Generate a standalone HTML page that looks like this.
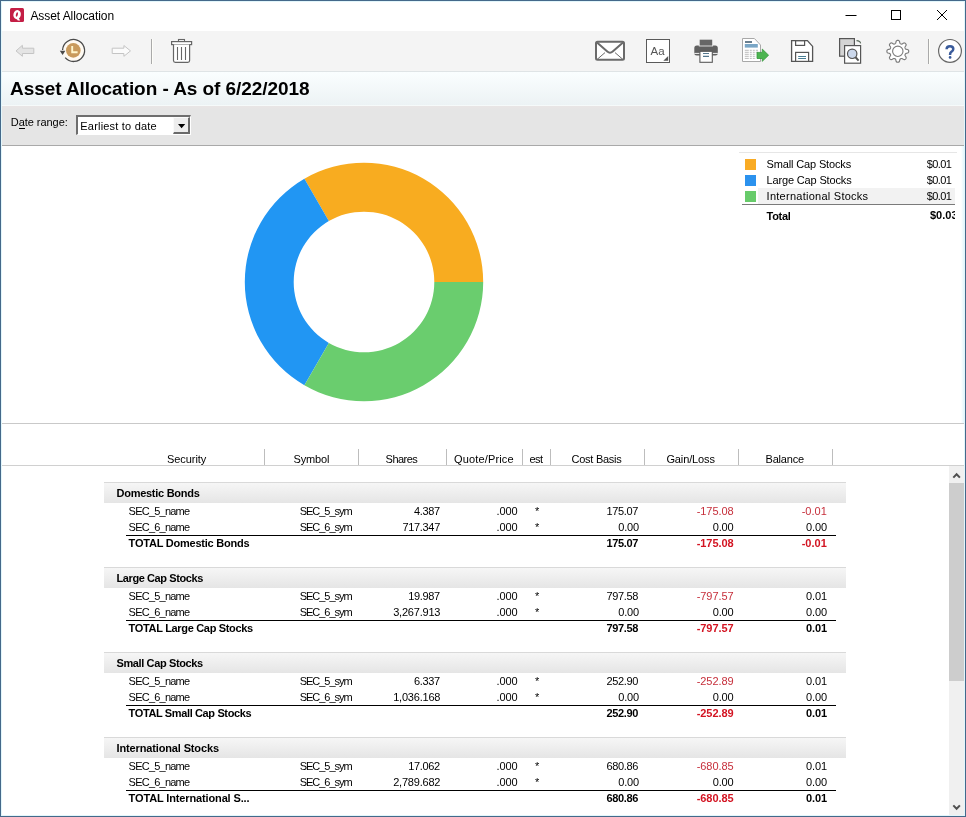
<!DOCTYPE html>
<html><head><meta charset="utf-8"><style>
html,body{margin:0;padding:0;width:966px;height:817px;overflow:hidden;background:#fff;}
body{position:relative;font-family:"Liberation Sans",sans-serif;color:#000;}
.t{position:absolute;white-space:nowrap;}
#w{position:absolute;left:0;top:0;width:966px;height:817px;will-change:transform;}
.b{position:absolute;}
</style></head><body><div id="w">
<div class="b" style="left:0px;top:0px;width:966px;height:31px;background:#fff"></div>
<div class="b" style="left:0px;top:31px;width:966px;height:40px;background:#f4f4f4"></div>
<div class="b" style="left:0px;top:71px;width:966px;height:1px;background:#dfe4e6"></div>
<div class="b" style="left:0px;top:72px;width:966px;height:34px;background:linear-gradient(#fafeff,#ecf2f4)"></div>
<div class="b" style="left:0px;top:105px;width:966px;height:1px;background:#f6fafa"></div>
<div class="b" style="left:0px;top:106px;width:966px;height:39px;background:linear-gradient(#e9e5e5,#e5e5e5 4px,#e5e5e5)"></div>
<div class="b" style="left:0px;top:145px;width:966px;height:1px;background:#a9a9a9"></div>
<div class="b" style="left:0px;top:146px;width:966px;height:277px;background:#fff"></div>
<div class="b" style="left:0px;top:423px;width:966px;height:1px;background:#c9c9c9"></div>
<div class="b" style="left:0px;top:424px;width:966px;height:41px;background:#fff"></div>
<div class="b" style="left:0px;top:465px;width:964px;height:1px;background:#d0d0d0"></div>
<div class="t" style="left:30.40px;top:9.84px;font-size:12px;line-height:12px;letter-spacing:-0.067px;">Asset Allocation</div>
<div class="t" style="left:10.00px;top:78.92px;font-size:19px;line-height:19px;font-weight:bold;letter-spacing:-0.061px;">Asset Allocation - As of 6/22/2018</div>
<div class="t" style="left:10.80px;top:116.99px;font-size:11px;line-height:11px;letter-spacing:-0.050px;">Date range:</div>
<div class="b" style="left:18.9375px;top:128px;width:6px;height:1px;background:#000"></div>
<div class="b" style="left:76px;top:115px;width:115px;height:20px;background:#fff;border-top:2px solid #6e6e6e;border-left:2px solid #6e6e6e;border-bottom:1px solid #fff;border-right:1px solid #fff;box-sizing:border-box;"></div>
<div class="t" style="left:80.30px;top:120.99px;font-size:11px;line-height:11px;letter-spacing:0.200px;">Earliest to date</div>
<div class="b" style="left:173px;top:117px;width:17px;height:17px;background:#ededed;border-top:1px solid #fafafa;border-left:1px solid #fafafa;border-bottom:2px solid #6a6a6a;border-right:2px solid #6a6a6a;box-sizing:border-box;"></div>
<div class="b" style="left:739px;top:152px;width:218px;height:1px;background:#e6e6e6"></div>
<div class="b" style="left:758px;top:188px;width:197px;height:16px;background:#f2f2f2"></div>
<div class="b" style="left:742px;top:204px;width:213px;height:1px;background:#7a7a7a"></div>
<div class="b" style="left:745px;top:159px;width:11px;height:11px;background:#f9ab24"></div>
<div class="t" style="left:766.60px;top:158.69px;font-size:11px;line-height:11px;letter-spacing:-0.147px;">Small Cap Stocks</div>
<div class="t" style="left:926.70px;top:158.69px;font-size:11px;line-height:11px;letter-spacing:-0.600px;">$0.01</div>
<div class="b" style="left:745px;top:175px;width:11px;height:11px;background:#2b92ee"></div>
<div class="t" style="left:766.60px;top:174.69px;font-size:11px;line-height:11px;letter-spacing:-0.160px;">Large Cap Stocks</div>
<div class="t" style="left:926.70px;top:174.69px;font-size:11px;line-height:11px;letter-spacing:-0.600px;">$0.01</div>
<div class="b" style="left:745px;top:191px;width:11px;height:11px;background:#67cb6a"></div>
<div class="t" style="left:766.60px;top:190.69px;font-size:11px;line-height:11px;letter-spacing:0.258px;">International Stocks</div>
<div class="t" style="left:926.70px;top:190.69px;font-size:11px;line-height:11px;letter-spacing:-0.600px;">$0.01</div>
<div class="t" style="left:766.60px;top:210.89px;font-size:11px;line-height:11px;font-weight:bold;letter-spacing:-0.325px;">Total</div>
<div style="position:absolute;left:900px;top:205px;width:55px;height:20px;overflow:hidden"><div class="t" style="left:30px;top:5.4px;font-size:11px;line-height:11px;font-weight:bold">$0.03</div></div>
<div class="b" style="left:264px;top:449px;width:1px;height:16px;background:#bdbdbd"></div>
<div class="b" style="left:358px;top:449px;width:1px;height:16px;background:#bdbdbd"></div>
<div class="b" style="left:446px;top:449px;width:1px;height:16px;background:#bdbdbd"></div>
<div class="b" style="left:522px;top:449px;width:1px;height:16px;background:#bdbdbd"></div>
<div class="b" style="left:550px;top:449px;width:1px;height:16px;background:#bdbdbd"></div>
<div class="b" style="left:644px;top:449px;width:1px;height:16px;background:#bdbdbd"></div>
<div class="b" style="left:738px;top:449px;width:1px;height:16px;background:#bdbdbd"></div>
<div class="b" style="left:832px;top:449px;width:1px;height:16px;background:#bdbdbd"></div>
<div class="t" style="left:167.00px;top:454.09px;font-size:11px;line-height:11px;letter-spacing:-0.071px;">Security</div>
<div class="t" style="left:293.50px;top:454.09px;font-size:11px;line-height:11px;letter-spacing:-0.160px;">Symbol</div>
<div class="t" style="left:385.60px;top:454.09px;font-size:11px;line-height:11px;letter-spacing:-0.520px;">Shares</div>
<div class="t" style="left:454.00px;top:454.09px;font-size:11px;line-height:11px;letter-spacing:0.150px;">Quote/Price</div>
<div class="t" style="left:529.40px;top:454.09px;font-size:11px;line-height:11px;letter-spacing:-0.450px;">est</div>
<div class="t" style="left:571.50px;top:454.09px;font-size:11px;line-height:11px;letter-spacing:-0.256px;">Cost Basis</div>
<div class="t" style="left:666.40px;top:454.09px;font-size:11px;line-height:11px;letter-spacing:-0.125px;">Gain/Loss</div>
<div class="t" style="left:765.50px;top:454.09px;font-size:11px;line-height:11px;letter-spacing:-0.200px;">Balance</div>
<div class="b" style="left:104px;top:482px;width:742px;height:1px;background:#d9d9d9"></div>
<div class="b" style="left:104px;top:483px;width:742px;height:20px;background:linear-gradient(#f6f6f6,#e5e5e5)"></div>
<div class="t" style="left:116.50px;top:487.89px;font-size:11px;line-height:11px;font-weight:bold;letter-spacing:-0.269px;">Domestic Bonds</div>
<div class="t" style="left:128.60px;top:505.69px;font-size:11px;line-height:11px;letter-spacing:-0.778px;">SEC_5_name</div>
<div class="t" style="left:299.70px;top:505.69px;font-size:11px;line-height:11px;letter-spacing:-1.025px;">SEC_5_sym</div>
<div class="t" style="left:414.10px;top:505.69px;font-size:11px;line-height:11px;letter-spacing:-0.400px;">4.387</div>
<div class="t" style="left:496.60px;top:505.69px;font-size:11px;line-height:11px;letter-spacing:-0.133px;">.000</div>
<div class="t" style="left:535.00px;top:505.69px;font-size:11px;line-height:11px;">*</div>
<div class="t" style="left:606.60px;top:505.69px;font-size:11px;line-height:11px;letter-spacing:-0.360px;">175.07</div>
<div class="t" style="left:696.70px;top:505.69px;font-size:11px;line-height:11px;color:#c62f3b;letter-spacing:-0.067px;">-175.08</div>
<div class="t" style="left:801.70px;top:505.69px;font-size:11px;line-height:11px;color:#c62f3b;">-0.01</div>
<div class="t" style="left:128.60px;top:521.69px;font-size:11px;line-height:11px;letter-spacing:-0.778px;">SEC_6_name</div>
<div class="t" style="left:299.70px;top:521.69px;font-size:11px;line-height:11px;letter-spacing:-1.025px;">SEC_6_sym</div>
<div class="t" style="left:402.50px;top:521.69px;font-size:11px;line-height:11px;letter-spacing:-0.333px;">717.347</div>
<div class="t" style="left:496.60px;top:521.69px;font-size:11px;line-height:11px;letter-spacing:-0.133px;">.000</div>
<div class="t" style="left:535.00px;top:521.69px;font-size:11px;line-height:11px;">*</div>
<div class="t" style="left:618.20px;top:521.69px;font-size:11px;line-height:11px;letter-spacing:-0.133px;">0.00</div>
<div class="t" style="left:712.70px;top:521.69px;font-size:11px;line-height:11px;letter-spacing:-0.133px;">0.00</div>
<div class="t" style="left:806.10px;top:521.69px;font-size:11px;line-height:11px;letter-spacing:-0.133px;">0.00</div>
<div class="b" style="left:126px;top:535px;width:710px;height:1px;background:#000"></div>
<div class="t" style="left:128.60px;top:537.99px;font-size:11px;line-height:11px;font-weight:bold;letter-spacing:-0.221px;">TOTAL Domestic Bonds</div>
<div class="t" style="left:606.60px;top:537.99px;font-size:11px;line-height:11px;font-weight:bold;letter-spacing:-0.360px;">175.07</div>
<div class="t" style="left:696.70px;top:537.99px;font-size:11px;line-height:11px;font-weight:bold;color:#d31422;letter-spacing:-0.067px;">-175.08</div>
<div class="t" style="left:801.70px;top:537.99px;font-size:11px;line-height:11px;font-weight:bold;color:#d31422;">-0.01</div>
<div class="b" style="left:104px;top:567px;width:742px;height:1px;background:#d9d9d9"></div>
<div class="b" style="left:104px;top:568px;width:742px;height:20px;background:linear-gradient(#f6f6f6,#e5e5e5)"></div>
<div class="t" style="left:116.50px;top:572.89px;font-size:11px;line-height:11px;font-weight:bold;letter-spacing:-0.407px;">Large Cap Stocks</div>
<div class="t" style="left:128.60px;top:590.69px;font-size:11px;line-height:11px;letter-spacing:-0.778px;">SEC_5_name</div>
<div class="t" style="left:299.70px;top:590.69px;font-size:11px;line-height:11px;letter-spacing:-1.025px;">SEC_5_sym</div>
<div class="t" style="left:408.30px;top:590.69px;font-size:11px;line-height:11px;letter-spacing:-0.360px;">19.987</div>
<div class="t" style="left:496.60px;top:590.69px;font-size:11px;line-height:11px;letter-spacing:-0.133px;">.000</div>
<div class="t" style="left:535.00px;top:590.69px;font-size:11px;line-height:11px;">*</div>
<div class="t" style="left:606.60px;top:590.69px;font-size:11px;line-height:11px;letter-spacing:-0.360px;">797.58</div>
<div class="t" style="left:696.70px;top:590.69px;font-size:11px;line-height:11px;color:#c62f3b;letter-spacing:-0.067px;">-797.57</div>
<div class="t" style="left:806.10px;top:590.69px;font-size:11px;line-height:11px;letter-spacing:-0.133px;">0.01</div>
<div class="t" style="left:128.60px;top:606.69px;font-size:11px;line-height:11px;letter-spacing:-0.778px;">SEC_6_name</div>
<div class="t" style="left:299.70px;top:606.69px;font-size:11px;line-height:11px;letter-spacing:-1.025px;">SEC_6_sym</div>
<div class="t" style="left:393.20px;top:606.69px;font-size:11px;line-height:11px;letter-spacing:-0.213px;">3,267.913</div>
<div class="t" style="left:496.60px;top:606.69px;font-size:11px;line-height:11px;letter-spacing:-0.133px;">.000</div>
<div class="t" style="left:535.00px;top:606.69px;font-size:11px;line-height:11px;">*</div>
<div class="t" style="left:618.20px;top:606.69px;font-size:11px;line-height:11px;letter-spacing:-0.133px;">0.00</div>
<div class="t" style="left:712.70px;top:606.69px;font-size:11px;line-height:11px;letter-spacing:-0.133px;">0.00</div>
<div class="t" style="left:806.10px;top:606.69px;font-size:11px;line-height:11px;letter-spacing:-0.133px;">0.00</div>
<div class="b" style="left:126px;top:620px;width:710px;height:1px;background:#000"></div>
<div class="t" style="left:128.60px;top:622.99px;font-size:11px;line-height:11px;font-weight:bold;letter-spacing:-0.324px;">TOTAL Large Cap Stocks</div>
<div class="t" style="left:606.60px;top:622.99px;font-size:11px;line-height:11px;font-weight:bold;letter-spacing:-0.360px;">797.58</div>
<div class="t" style="left:696.70px;top:622.99px;font-size:11px;line-height:11px;font-weight:bold;color:#d31422;letter-spacing:-0.067px;">-797.57</div>
<div class="t" style="left:806.10px;top:622.99px;font-size:11px;line-height:11px;font-weight:bold;letter-spacing:-0.133px;">0.01</div>
<div class="b" style="left:104px;top:652px;width:742px;height:1px;background:#d9d9d9"></div>
<div class="b" style="left:104px;top:653px;width:742px;height:20px;background:linear-gradient(#f6f6f6,#e5e5e5)"></div>
<div class="t" style="left:116.50px;top:657.89px;font-size:11px;line-height:11px;font-weight:bold;letter-spacing:-0.380px;">Small Cap Stocks</div>
<div class="t" style="left:128.60px;top:675.69px;font-size:11px;line-height:11px;letter-spacing:-0.778px;">SEC_5_name</div>
<div class="t" style="left:299.70px;top:675.69px;font-size:11px;line-height:11px;letter-spacing:-1.025px;">SEC_5_sym</div>
<div class="t" style="left:414.10px;top:675.69px;font-size:11px;line-height:11px;letter-spacing:-0.400px;">6.337</div>
<div class="t" style="left:496.60px;top:675.69px;font-size:11px;line-height:11px;letter-spacing:-0.133px;">.000</div>
<div class="t" style="left:535.00px;top:675.69px;font-size:11px;line-height:11px;">*</div>
<div class="t" style="left:606.60px;top:675.69px;font-size:11px;line-height:11px;letter-spacing:-0.360px;">252.90</div>
<div class="t" style="left:696.70px;top:675.69px;font-size:11px;line-height:11px;color:#c62f3b;letter-spacing:-0.067px;">-252.89</div>
<div class="t" style="left:806.10px;top:675.69px;font-size:11px;line-height:11px;letter-spacing:-0.133px;">0.01</div>
<div class="t" style="left:128.60px;top:691.69px;font-size:11px;line-height:11px;letter-spacing:-0.778px;">SEC_6_name</div>
<div class="t" style="left:299.70px;top:691.69px;font-size:11px;line-height:11px;letter-spacing:-1.025px;">SEC_6_sym</div>
<div class="t" style="left:393.20px;top:691.69px;font-size:11px;line-height:11px;letter-spacing:-0.213px;">1,036.168</div>
<div class="t" style="left:496.60px;top:691.69px;font-size:11px;line-height:11px;letter-spacing:-0.133px;">.000</div>
<div class="t" style="left:535.00px;top:691.69px;font-size:11px;line-height:11px;">*</div>
<div class="t" style="left:618.20px;top:691.69px;font-size:11px;line-height:11px;letter-spacing:-0.133px;">0.00</div>
<div class="t" style="left:712.70px;top:691.69px;font-size:11px;line-height:11px;letter-spacing:-0.133px;">0.00</div>
<div class="t" style="left:806.10px;top:691.69px;font-size:11px;line-height:11px;letter-spacing:-0.133px;">0.00</div>
<div class="b" style="left:126px;top:705px;width:710px;height:1px;background:#000"></div>
<div class="t" style="left:128.60px;top:707.99px;font-size:11px;line-height:11px;font-weight:bold;letter-spacing:-0.371px;">TOTAL Small Cap Stocks</div>
<div class="t" style="left:606.60px;top:707.99px;font-size:11px;line-height:11px;font-weight:bold;letter-spacing:-0.360px;">252.90</div>
<div class="t" style="left:696.70px;top:707.99px;font-size:11px;line-height:11px;font-weight:bold;color:#d31422;letter-spacing:-0.067px;">-252.89</div>
<div class="t" style="left:806.10px;top:707.99px;font-size:11px;line-height:11px;font-weight:bold;letter-spacing:-0.133px;">0.01</div>
<div class="b" style="left:104px;top:737px;width:742px;height:1px;background:#d9d9d9"></div>
<div class="b" style="left:104px;top:738px;width:742px;height:20px;background:linear-gradient(#f6f6f6,#e5e5e5)"></div>
<div class="t" style="left:116.50px;top:742.89px;font-size:11px;line-height:11px;font-weight:bold;letter-spacing:-0.137px;">International Stocks</div>
<div class="t" style="left:128.60px;top:760.69px;font-size:11px;line-height:11px;letter-spacing:-0.778px;">SEC_5_name</div>
<div class="t" style="left:299.70px;top:760.69px;font-size:11px;line-height:11px;letter-spacing:-1.025px;">SEC_5_sym</div>
<div class="t" style="left:408.30px;top:760.69px;font-size:11px;line-height:11px;letter-spacing:-0.360px;">17.062</div>
<div class="t" style="left:496.60px;top:760.69px;font-size:11px;line-height:11px;letter-spacing:-0.133px;">.000</div>
<div class="t" style="left:535.00px;top:760.69px;font-size:11px;line-height:11px;">*</div>
<div class="t" style="left:606.60px;top:760.69px;font-size:11px;line-height:11px;letter-spacing:-0.360px;">680.86</div>
<div class="t" style="left:696.70px;top:760.69px;font-size:11px;line-height:11px;color:#c62f3b;letter-spacing:-0.067px;">-680.85</div>
<div class="t" style="left:806.10px;top:760.69px;font-size:11px;line-height:11px;letter-spacing:-0.133px;">0.01</div>
<div class="t" style="left:128.60px;top:776.69px;font-size:11px;line-height:11px;letter-spacing:-0.778px;">SEC_6_name</div>
<div class="t" style="left:299.70px;top:776.69px;font-size:11px;line-height:11px;letter-spacing:-1.025px;">SEC_6_sym</div>
<div class="t" style="left:393.20px;top:776.69px;font-size:11px;line-height:11px;letter-spacing:-0.213px;">2,789.682</div>
<div class="t" style="left:496.60px;top:776.69px;font-size:11px;line-height:11px;letter-spacing:-0.133px;">.000</div>
<div class="t" style="left:535.00px;top:776.69px;font-size:11px;line-height:11px;">*</div>
<div class="t" style="left:618.20px;top:776.69px;font-size:11px;line-height:11px;letter-spacing:-0.133px;">0.00</div>
<div class="t" style="left:712.70px;top:776.69px;font-size:11px;line-height:11px;letter-spacing:-0.133px;">0.00</div>
<div class="t" style="left:806.10px;top:776.69px;font-size:11px;line-height:11px;letter-spacing:-0.133px;">0.00</div>
<div class="b" style="left:126px;top:790px;width:710px;height:1px;background:#000"></div>
<div class="t" style="left:128.60px;top:792.99px;font-size:11px;line-height:11px;font-weight:bold;letter-spacing:-0.135px;">TOTAL International S...</div>
<div class="t" style="left:606.60px;top:792.99px;font-size:11px;line-height:11px;font-weight:bold;letter-spacing:-0.360px;">680.86</div>
<div class="t" style="left:696.70px;top:792.99px;font-size:11px;line-height:11px;font-weight:bold;color:#d31422;letter-spacing:-0.067px;">-680.85</div>
<div class="t" style="left:806.10px;top:792.99px;font-size:11px;line-height:11px;font-weight:bold;letter-spacing:-0.133px;">0.01</div>
<div class="b" style="left:949px;top:466px;width:15px;height:350px;background:#f0f0f0"></div>
<div class="b" style="left:949px;top:483px;width:15px;height:198px;background:#cdcdcd"></div>
<div class="b" style="left:1px;top:1px;width:964px;height:1px;background:#e2f6fb"></div>
<div class="b" style="left:1px;top:1px;width:1px;height:815px;background:#e2f6fb"></div>
<div class="b" style="left:961px;top:146px;width:3px;height:277px;background:linear-gradient(90deg,rgba(235,250,255,0),#e4f7fd)"></div>
<div class="b" style="left:964px;top:1px;width:1px;height:815px;background:#e2f6fb"></div>
<div class="b" style="left:1px;top:815px;width:964px;height:1px;background:#e2f6fb"></div>
<div class="b" style="left:0px;top:0px;width:966px;height:1px;background:#44698a"></div>
<div class="b" style="left:0px;top:0px;width:1px;height:817px;background:#44698a"></div>
<div class="b" style="left:965px;top:0px;width:1px;height:817px;background:#44698a"></div>
<div class="b" style="left:0px;top:816px;width:966px;height:1px;background:#44698a"></div>
<svg class="b" style="left:0;top:0" width="966" height="817">
<path d="M483.20,282.00 A119.2,119.2 0 0 0 304.40,178.77 L328.85,221.12 A70.3,70.3 0 0 1 434.30,282.00 Z" fill="#f8ac20"/><path d="M304.40,178.77 A119.2,119.2 0 0 0 304.40,385.23 L328.85,342.88 A70.3,70.3 0 0 1 328.85,221.12 Z" fill="#2196f3"/><path d="M304.40,385.23 A119.2,119.2 0 0 0 483.20,282.00 L434.30,282.00 A70.3,70.3 0 0 1 328.85,342.88 Z" fill="#6acd6e"/>
<!-- title bar Q icon -->
<rect x="10" y="8" width="14" height="14" rx="1.5" fill="#c41e45"/>
<ellipse cx="17.1" cy="14.6" rx="3.7" ry="4.6" transform="rotate(14 17.1 14.6)" fill="#fff"/>
<ellipse cx="16.9" cy="14.5" rx="0.95" ry="2.4" transform="rotate(14 16.9 14.5)" fill="#c41e45"/>
<path d="M16.2,18.2 L18.6,18 L20.2,20.4 L17.8,20.6 Z" fill="#fff"/>
<!-- window controls -->
<rect x="845.5" y="15" width="11" height="1" fill="#000"/>
<rect x="891.5" y="10.5" width="9" height="9" fill="none" stroke="#000" stroke-width="1"/>
<path d="M937,10 L947,20 M947,10 L937,20" stroke="#000" stroke-width="1"/>
<!-- back arrow (disabled) -->
<path d="M16,50.9 L22.4,45.3 L22.4,48.2 L33.8,48.2 L33.8,53.5 L22.4,53.5 L22.4,56.3 Z" fill="#e4e4e4" stroke="#c4c4c4" stroke-width="1"/>
<!-- history clock -->
<circle cx="73.3" cy="50.4" r="10.6" fill="#fffaf2"/>
<path d="M62.6,50 A11,11 0 1 1 65.2,57.6" fill="none" stroke="#4a4a4a" stroke-width="1.3"/>
<path d="M59.8,50.8 L65.4,50.8 L62.6,55 Z" fill="#4a4a4a"/>
<circle cx="73.3" cy="50.4" r="7.3" fill="#c99a5c"/>
<path d="M72.2,46 L72.2,52.2 L77.6,52.2" fill="none" stroke="#fff6cc" stroke-width="1.9"/>
<!-- forward arrow (disabled) -->
<path d="M130.5,50.9 L123.9,45.5 L123.9,48.2 L112.2,48.2 L112.2,53.5 L123.9,53.5 L123.9,56.3 Z" fill="#fbfbfb" stroke="#c4c4c4" stroke-width="1"/>
<!-- separator -->
<rect x="151" y="39" width="1" height="25" fill="#aaaaaa"/><rect x="152" y="39" width="1" height="25" fill="#fdfdf8"/>
<!-- trash -->
<rect x="178.5" y="39.5" width="6" height="2.2" fill="none" stroke="#666" stroke-width="1.1"/>
<rect x="171.6" y="41.6" width="20" height="3" fill="#fff" stroke="#666" stroke-width="1.2"/>
<path d="M173.5,44.6 L173.5,60.5 Q173.5,62.3 175.3,62.3 L187.8,62.3 Q189.6,62.3 189.6,60.5 L189.6,44.6" fill="#fff" stroke="#666" stroke-width="1.2"/>
<path d="M177.5,47 V60 M181.5,47 V60 M185.5,47 V60" stroke="#666" stroke-width="1.1"/>
<!-- envelope -->
<rect x="596" y="41.8" width="28" height="18" rx="1.5" fill="#fff" stroke="#6a6a6a" stroke-width="2"/>
<path d="M597,42.5 L607.3,51.6 Q610,54 612.7,51.6 L623,42.5" fill="none" stroke="#6a6a6a" stroke-width="2"/>
<path d="M597,59.5 L605,52.6 M615,52.6 L623,59.5" fill="none" stroke="#6a6a6a" stroke-width="1"/>
<!-- Aa -->
<rect x="646.5" y="39.5" width="23" height="23" fill="#fff" stroke="#5a5a5a" stroke-width="1"/>
<text x="657.6" y="54.6" font-family="Liberation Sans" font-size="11.5" fill="#555" text-anchor="middle">Aa</text>
<path d="M668.2,56 L668.2,60.8 L663.3,60.8 Z" fill="#555"/>
<!-- printer -->
<rect x="694.3" y="45.6" width="23.5" height="10" rx="2.5" fill="#606060"/>
<rect x="699.2" y="39.2" width="13.5" height="6.8" fill="#666" stroke="#f4f4f4" stroke-width="0.8"/>
<rect x="694.3" y="52.9" width="23.5" height="1" fill="#f4f4f4"/>
<rect x="699.9" y="51.3" width="12.4" height="11" fill="#fff" stroke="#5a5a5a" stroke-width="1.1"/>
<path d="M703,53.5 H709 M703,56.4 H709" stroke="#55788e" stroke-width="1.1"/>
<!-- export -->
<path d="M742.5,38.5 L754.4,38.5 L760.5,45 L760.5,61.5 L742.5,61.5 Z" fill="#fff" stroke="#a8a8a8" stroke-width="1"/>
<rect x="745" y="41" width="7" height="2" fill="#6a7f8f"/>
<rect x="744.8" y="44" width="13" height="3.6" fill="#7aa6c6"/>
<path d="M744.8,50.3 H758 M744.8,52.3 H758 M744.8,54.3 H756 M744.8,56.3 H756 M744.8,58.4 H756" stroke="#b4b4b4" stroke-width="0.9" stroke-dasharray="4,1,2,1,2,1"/>
<path d="M757,52.4 L762.3,52.4 L762.3,49.1 L768.6,55.2 L762.3,61.3 L762.3,58.5 L757,58.5 Z" fill="#4cb450" stroke="#36983c" stroke-width="0.8"/>
<!-- save -->
<path d="M791.6,40.6 L807.4,40.6 L812.6,46.4 L812.6,61.4 L791.6,61.4 Z" fill="#fff" stroke="#555" stroke-width="1.3"/>
<rect x="795.6" y="40.8" width="9" height="4.6" fill="#fff" stroke="#555" stroke-width="1.2"/>
<rect x="795.6" y="52.4" width="13" height="9" fill="#fff" stroke="#555" stroke-width="1.2"/>
<path d="M798.2,56.5 H806 M798.2,58.5 H806" stroke="#4a7f95" stroke-width="1"/>
<!-- preview -->
<rect x="839.6" y="38.6" width="14.8" height="17.6" fill="#d4d4d4" stroke="#555" stroke-width="1.2"/>
<rect x="844.6" y="45.6" width="16" height="17.6" fill="#fff" stroke="#555" stroke-width="1.2"/>
<path d="M856.5,40.6 Q860.4,40.8 860.6,43.4" fill="none" stroke="#5d6b5d" stroke-width="1.1"/>
<path d="M855.3,57 L858.6,60.6" stroke="#555" stroke-width="2"/>
<circle cx="852.2" cy="53.8" r="4.7" fill="#ccd8ec" stroke="#555" stroke-width="1.2"/>
<!-- gear -->
<path id="gear" d="M908.70,51.30 L908.69,51.59 L908.66,51.87 L908.59,52.15 L908.47,52.42 L908.26,52.68 L907.90,52.90 L907.37,53.07 L906.76,53.21 L906.24,53.33 L905.87,53.46 L905.63,53.62 L905.48,53.80 L905.37,53.98 L905.27,54.17 L905.19,54.36 L905.11,54.56 L905.05,54.76 L905.00,54.97 L904.98,55.20 L905.03,55.48 L905.20,55.83 L905.49,56.29 L905.82,56.81 L906.07,57.31 L906.17,57.72 L906.14,58.05 L906.03,58.33 L905.88,58.57 L905.70,58.80 L905.51,59.01 L905.30,59.20 L905.07,59.38 L904.83,59.53 L904.55,59.64 L904.22,59.67 L903.81,59.57 L903.31,59.32 L902.79,58.99 L902.33,58.70 L901.98,58.53 L901.70,58.48 L901.47,58.50 L901.26,58.55 L901.06,58.61 L900.86,58.69 L900.67,58.77 L900.48,58.87 L900.30,58.98 L900.12,59.13 L899.96,59.37 L899.83,59.74 L899.71,60.26 L899.57,60.87 L899.40,61.40 L899.18,61.76 L898.92,61.97 L898.65,62.09 L898.37,62.16 L898.09,62.19 L897.80,62.20 L897.51,62.19 L897.23,62.16 L896.95,62.09 L896.68,61.97 L896.42,61.76 L896.20,61.40 L896.03,60.87 L895.89,60.26 L895.77,59.74 L895.64,59.37 L895.48,59.13 L895.30,58.98 L895.12,58.87 L894.93,58.77 L894.74,58.69 L894.54,58.61 L894.34,58.55 L894.13,58.50 L893.90,58.48 L893.62,58.53 L893.27,58.70 L892.81,58.99 L892.29,59.32 L891.79,59.57 L891.38,59.67 L891.05,59.64 L890.77,59.53 L890.53,59.38 L890.30,59.20 L890.09,59.01 L889.90,58.80 L889.72,58.57 L889.57,58.33 L889.46,58.05 L889.43,57.72 L889.53,57.31 L889.78,56.81 L890.11,56.29 L890.40,55.83 L890.57,55.48 L890.62,55.20 L890.60,54.97 L890.55,54.76 L890.49,54.56 L890.41,54.36 L890.33,54.17 L890.23,53.98 L890.12,53.80 L889.97,53.62 L889.73,53.46 L889.36,53.33 L888.84,53.21 L888.23,53.07 L887.70,52.90 L887.34,52.68 L887.13,52.42 L887.01,52.15 L886.94,51.87 L886.91,51.59 L886.90,51.30 L886.91,51.01 L886.94,50.73 L887.01,50.45 L887.13,50.18 L887.34,49.92 L887.70,49.70 L888.23,49.53 L888.84,49.39 L889.36,49.27 L889.73,49.14 L889.97,48.98 L890.12,48.80 L890.23,48.62 L890.33,48.43 L890.41,48.24 L890.49,48.04 L890.55,47.84 L890.60,47.63 L890.62,47.40 L890.57,47.12 L890.40,46.77 L890.11,46.31 L889.78,45.79 L889.53,45.29 L889.43,44.88 L889.46,44.55 L889.57,44.27 L889.72,44.03 L889.90,43.80 L890.09,43.59 L890.30,43.40 L890.53,43.22 L890.77,43.07 L891.05,42.96 L891.38,42.93 L891.79,43.03 L892.29,43.28 L892.81,43.61 L893.27,43.90 L893.62,44.07 L893.90,44.12 L894.13,44.10 L894.34,44.05 L894.54,43.99 L894.74,43.91 L894.93,43.83 L895.12,43.73 L895.30,43.62 L895.48,43.47 L895.64,43.23 L895.77,42.86 L895.89,42.34 L896.03,41.73 L896.20,41.20 L896.42,40.84 L896.68,40.63 L896.95,40.51 L897.23,40.44 L897.51,40.41 L897.80,40.40 L898.09,40.41 L898.37,40.44 L898.65,40.51 L898.92,40.63 L899.18,40.84 L899.40,41.20 L899.57,41.73 L899.71,42.34 L899.83,42.86 L899.96,43.23 L900.12,43.47 L900.30,43.62 L900.48,43.73 L900.67,43.83 L900.86,43.91 L901.06,43.99 L901.26,44.05 L901.47,44.10 L901.70,44.12 L901.98,44.07 L902.33,43.90 L902.79,43.61 L903.31,43.28 L903.81,43.03 L904.22,42.93 L904.55,42.96 L904.83,43.07 L905.07,43.22 L905.30,43.40 L905.51,43.59 L905.70,43.80 L905.88,44.03 L906.03,44.27 L906.14,44.55 L906.17,44.88 L906.07,45.29 L905.82,45.79 L905.49,46.31 L905.20,46.77 L905.03,47.12 L904.98,47.40 L905.00,47.63 L905.05,47.84 L905.11,48.04 L905.19,48.24 L905.27,48.43 L905.37,48.62 L905.48,48.80 L905.63,48.98 L905.87,49.14 L906.24,49.27 L906.76,49.39 L907.37,49.53 L907.90,49.70 L908.26,49.92 L908.47,50.18 L908.59,50.45 L908.66,50.73 L908.69,51.01 Z" fill="#fff" stroke="#7a7a7a" stroke-width="1.15"/>
<circle cx="897.8" cy="51.3" r="5.2" fill="#fff" stroke="#7a7a7a" stroke-width="1.1"/>
<!-- separator 2 -->
<rect x="928" y="39" width="1" height="25" fill="#aaaaaa"/><rect x="929" y="39" width="1" height="25" fill="#fdfdf8"/>
<!-- help -->
<circle cx="950" cy="50.9" r="11.4" fill="#fff" stroke="#666" stroke-width="1.2"/>
<path d="M946.6,49.2 Q946.6,46.2 950,46.2 Q953.3,46.2 953.3,49 Q953.3,50.8 951.3,51.9 Q950.1,52.6 950.1,54.3 V55" fill="none" stroke="#3a5b9b" stroke-width="2.5"/><circle cx="950.1" cy="57.4" r="1.35" fill="#3a5b9b"/>
<!-- combo arrow -->
<path d="M178,124 L185.2,124 L181.6,128.2 Z" fill="#000"/>
<!-- scrollbar arrows -->
<path d="M953.3,477.6 L956.6,474.2 L959.9,477.6" fill="none" stroke="#505050" stroke-width="2"/>
<path d="M953.3,805.4 L956.6,808.8 L959.9,805.4" fill="none" stroke="#505050" stroke-width="2"/>

</svg>
</div></body></html>
